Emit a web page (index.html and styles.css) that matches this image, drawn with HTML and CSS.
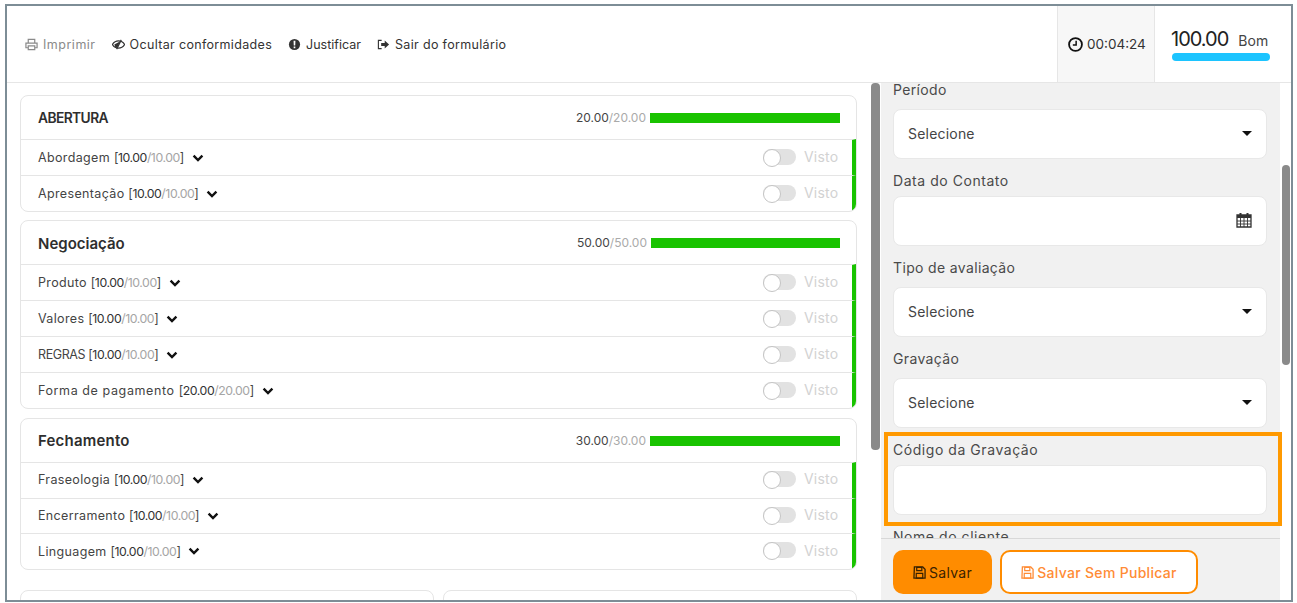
FILE: index.html
```html
<!DOCTYPE html>
<html lang="pt">
<head>
<meta charset="utf-8">
<title>Formulário</title>
<link rel="stylesheet" href="styles.css">
</head>
<body>
<svg class="defs" width="0" height="0" aria-hidden="true">
  <symbol id="chev" viewBox="0 0 12 8"><path d="M1.6 1.6 6 6l4.4-4.4" fill="none" stroke="currentColor" stroke-width="2.4"/></symbol>
  <symbol id="save" viewBox="0 0 14 14"><path d="M1.5 1h9L13 3.5V13H1z" fill="none" stroke="currentColor" stroke-width="1.4"/><path d="M4 1.5h5.500v3.500H4zM3.500 8h7v5h-7z" fill="none" stroke="currentColor" stroke-width="1.300"/></symbol>
</svg>
<div class="frame">
  <header class="topbar">
    <nav class="actions">
      <a class="action muted">
        <svg class="ico" viewBox="0 0 14 14"><path d="M3.500 5V1.500h7V5M3.500 10.500H1V5.500h12v5h-2.500M3.500 8.500h7v4h-7z" fill="none" stroke="currentColor" stroke-width="1.300"/></svg>
        Imprimir</a>
      <a class="action">
        <svg class="ico" viewBox="0 0 14 14"><path d="M.5 7C2 4.600 4.300 3.200 7 3.200S12 4.600 13.500 7C12 9.400 9.700 10.800 7 10.800S2 9.400.5 7z" fill="none" stroke="currentColor" stroke-width="1.300"/><path d="M2.500 7 9 3.500 5.500 10.500A3.800 3.800 0 0 1 2.500 7z" fill="currentColor"/><path d="M10 2 5 12" stroke="currentColor" stroke-width="1.300"/></svg>
        Ocultar conformidades</a>
      <a class="action tight">
        <svg class="ico" viewBox="0 0 14 14"><circle cx="7" cy="7" r="6" fill="currentColor"/><path d="M6 3h2l-.2 5H6.200zM6.100 9.200h1.800V11H6.100z" fill="#fff"/></svg>
        Justificar</a>
      <a class="action">
        <svg class="ico" viewBox="0 0 14 14"><path d="M5 2.500H1.500v9H5" fill="none" stroke="currentColor" stroke-width="1.200"/><path d="M4.500 5.500h3.800V2.800L13 7l-4.700 4.200V8.500H4.500z" fill="currentColor"/></svg>
        Sair do formulário</a>
    </nav>
    <div class="timer">
      <svg class="clock" viewBox="0 0 14 14"><circle cx="7" cy="7" r="6" fill="none" stroke="currentColor" stroke-width="1.700"/><path d="M7.600 3.500v4H4.500" fill="none" stroke="currentColor" stroke-width="1.400"/></svg>
      <span>00:04:24</span>
    </div>
    <div class="score">
      <div class="score-line"><span class="score-num">100.00</span><span class="score-word">Bom</span></div>
      <div class="score-bar"></div>
    </div>
  </header>

  <div class="main">
    <section class="left">
      <div class="cards">
        <article class="card first">
          <div class="card-head"><h2>ABERTURA</h2><span class="pts"><b>20.00</b>/20.00</span><span class="bar"></span></div>
          <div class="rows">
            <div class="row"><span class="q">Abordagem <span class="n">[<b>10.00</b><i>/10.00</i>]</span></span><svg class="chev"><use href="#chev"/></svg><span class="switch"></span><span class="seen">Visto</span></div>
            <div class="row"><span class="q">Apresentação <span class="n">[<b>10.00</b><i>/10.00</i>]</span></span><svg class="chev"><use href="#chev"/></svg><span class="switch"></span><span class="seen">Visto</span></div>
          </div>
        </article>
        <article class="card">
          <div class="card-head"><h2 class="big">Negociação</h2><span class="pts"><b>50.00</b>/50.00</span><span class="bar narrow"></span></div>
          <div class="rows">
            <div class="row"><span class="q">Produto <span class="n">[<b>10.00</b><i>/10.00</i>]</span></span><svg class="chev"><use href="#chev"/></svg><span class="switch"></span><span class="seen">Visto</span></div>
            <div class="row"><span class="q">Valores <span class="n">[<b>10.00</b><i>/10.00</i>]</span></span><svg class="chev"><use href="#chev"/></svg><span class="switch"></span><span class="seen">Visto</span></div>
            <div class="row"><span class="q caps">REGRAS <span class="n">[<b>10.00</b><i>/10.00</i>]</span></span><svg class="chev"><use href="#chev"/></svg><span class="switch"></span><span class="seen">Visto</span></div>
            <div class="row"><span class="q wide">Forma de pagamento <span class="n">[<b>20.00</b><i>/20.00</i>]</span></span><svg class="chev"><use href="#chev"/></svg><span class="switch"></span><span class="seen">Visto</span></div>
          </div>
        </article>
        <article class="card last">
          <div class="card-head"><h2 class="big">Fechamento</h2><span class="pts"><b>30.00</b>/30.00</span><span class="bar"></span></div>
          <div class="rows">
            <div class="row"><span class="q">Fraseologia <span class="n">[<b>10.00</b><i>/10.00</i>]</span></span><svg class="chev"><use href="#chev"/></svg><span class="switch"></span><span class="seen">Visto</span></div>
            <div class="row"><span class="q">Encerramento <span class="n">[<b>10.00</b><i>/10.00</i>]</span></span><svg class="chev"><use href="#chev"/></svg><span class="switch"></span><span class="seen">Visto</span></div>
            <div class="row"><span class="q">Linguagem <span class="n">[<b>10.00</b><i>/10.00</i>]</span></span><svg class="chev"><use href="#chev"/></svg><span class="switch"></span><span class="seen">Visto</span></div>
          </div>
        </article>
        <div class="halves"><div class="half"></div><div class="half"></div></div>
      </div>
      <div class="thumb-left"></div>
    </section>

    <aside class="panel">
      <div class="scroll">
        <div class="form">
          <div class="field"><label class="lab sel">Período</label><div class="box select">Selecione<span class="caret"></span></div></div>
          <div class="field"><label class="lab">Data do Contato</label><div class="box date">
            <svg class="cal" viewBox="0 0 16 16"><path d="M1 3h14v12H1z" fill="none" stroke="currentColor" stroke-width="1.300"/><path d="M1 3h14v3H1z" fill="currentColor"/><path d="M4.500 1v3M11.500 1v3" stroke="currentColor" stroke-width="2"/><path d="M1 9h14M1 12h14M4.500 6v9M8 6v9M11.500 6v9" stroke="currentColor" stroke-width=".9"/></svg>
          </div></div>
          <div class="field"><label class="lab sel">Tipo de avaliação</label><div class="box select">Selecione<span class="caret"></span></div></div>
          <div class="field"><label class="lab sel">Gravação</label><div class="box select">Selecione<span class="caret"></span></div></div>
          <div class="field"><label class="lab">Código da Gravação</label><div class="box"></div></div>
          <div class="field"><label class="lab">Nome do cliente</label><div class="box"></div></div>
        </div>
      </div>
      <footer class="foot">
        <button class="btn solid"><svg class="save"><use href="#save"/></svg>Salvar</button>
        <button class="btn outline"><svg class="save"><use href="#save"/></svg>Salvar Sem Publicar</button>
      </footer>
    </aside>
    <div class="track-right"><div class="thumb-right"></div></div>
  </div>
  <div class="highlight"></div>
</div>
</body>
</html>
```
FILE: styles.css
```css
* { box-sizing: border-box; }
html, body { margin: 0; height: 100%; background: #fff; overflow: hidden; }
body {
  padding: 4px 4px 1px 5px;
  font-family: "Inter", "Noto Sans", sans-serif;
  color: #3d3d3d;
  font-size: 12.5px;
}
.defs { position: absolute; }
.frame {
  position: relative;
  width: 1288px;
  height: 598px;
  border: 2px solid #7d8d96;
  background: #fff;
  overflow: hidden;
  display: flex;
  flex-direction: column;
}
.topbar {
  height: 77px;
  flex: none;
  display: flex;
  border-bottom: 1px solid #e6e6e6;
}
.actions { flex: 1; display: flex; align-items: center; gap: 16px; padding-left: 18px; }
.action { display: flex; align-items: center; gap: 5px; color: #333; letter-spacing: .33px; white-space: nowrap; }
.action.muted { color: #8a8a8a; letter-spacing: .5px; }
.action.tight { letter-spacing: 0; }
.ico { width: 13px; height: 13px; flex: none; }
.timer {
  width: 98px;
  display: flex;
  align-items: center;
  gap: 4px;
  padding-left: 10px;
  background: #f7f7f7;
  border-left: 1px solid #e6e6e6;
  border-right: 1px solid #e6e6e6;
  font-size: 13.500px;
  color: #333;
}
.clock { width: 15px; height: 15px; color: #111; flex: none; }
.score { width: 136px; padding: 21px 0 0 16px; }
.score-line { display: flex; align-items: baseline; gap: 10px; width: 99px; height: 26px; white-space: nowrap; }
.score-num { font-size: 20px; color: #222; letter-spacing: -1px; }
.score-word { font-size: 14px; color: #444; }
.score-bar { width: 98px; height: 8px; margin-left: 1px; border-radius: 4px; background: #1cc4ff; }

.main { flex: 1; min-height: 0; display: flex; }
.left { width: 874px; flex: none; display: flex; }
.cards { width: 864px; flex: none; padding: 12px 14px 0 13px; overflow: hidden; }
.thumb-left { width: 9px; height: 367px; background: #8a8a8a; border-radius: 4px; }
.card { border: 1px solid #e5e5e5; border-radius: 8px; margin-bottom: 9px; overflow: hidden; }
.card.first { margin-bottom: 8px; }
.card.last { margin-bottom: 20px; }
.card-head { height: 43px; display: flex; align-items: center; padding: 0 16px 0 17px; }
.card-head h2 { margin: 0; flex: 1; font-size: 13.800px; font-weight: 600; color: #2e2e2e; letter-spacing: -.6px; }
.card-head h2.big { font-size: 15px; letter-spacing: 0; padding-top: 1px; }
.last .card-head h2.big { letter-spacing: .2px; padding-top: 0; }
.pts { font-size: 12px; color: #aaa; margin-right: 4px; }
.pts b { font-weight: 400; color: #444; }
.bar { width: 190px; height: 10px; background: #19c300; }
.bar.narrow { width: 189px; }
.row { height: 36px; border-top: 1px solid #e5e5e5; border-right: 4px solid #19c300; display: flex; align-items: center; padding: 0 13px 0 17px; }
.last .row { height: 35.700px; padding-bottom: 1px; }
.q { white-space: nowrap; color: #444; font-size: 12.500px; letter-spacing: .35px; }
.q.caps { letter-spacing: -.4px; }
.q.wide { letter-spacing: .6px; }
.n { letter-spacing: -.45px; font-size: 12.300px; }
.q b { font-weight: 400; color: #333; }
.q i { font-style: normal; color: #a5a5a5; }
.chev { width: 12px; height: 8px; margin-left: 8px; color: #111; flex: none; }
.switch { position: relative; width: 33px; height: 16px; margin: 0 0 2px auto; background: #e2e2e2; border-radius: 8px; flex: none; }
.switch::before { content: ""; position: absolute; left: 0; top: 0; width: 16px; height: 16px; border-radius: 50%; background: #fff; border: 1px solid #c4c4c4; }
.seen { width: 35px; margin: 0 0 2px 8px; color: #d2d2d2; font-size: 14px; letter-spacing: .2px; flex: none; }
.halves { display: flex; gap: 9px; }
.half { flex: 1; height: 40px; border: 1px solid #e5e5e5; border-radius: 8px; }

.panel { width: 399px; flex: none; display: flex; flex-direction: column; background: #f1f1f1; }
.scroll { flex: 1; min-height: 0; overflow: hidden; }
.form { margin-top: -3px; padding: 0 13px 0 12px; }
.field { margin-bottom: 12px; }
.lab { display: block; height: 20px; line-height: 19px; margin-bottom: 5px; font-size: 14px; color: #4a4a4a; letter-spacing: .55px; }
.lab.sel { margin-bottom: 9px; letter-spacing: .35px; }
.box { height: 50px; background: #fff; border: 1px solid #e8e8e8; border-radius: 8px; display: flex; align-items: center; padding: 0 14px 2px; color: #444; font-size: 14px; letter-spacing: .2px; }
.box.date { justify-content: flex-end; padding: 0 14px; }
.caret { margin-left: auto; width: 0; height: 0; border-left: 5px solid transparent; border-right: 5px solid transparent; border-top: 5px solid #111; }
.cal { width: 16px; height: 16px; color: #333; margin-top: -2px; }
.foot { height: 62px; flex: none; display: flex; gap: 8px; padding: 11px 12px 0; border-top: 1px solid #d8d8d8; }
.btn { height: 44px; border-radius: 10px; font: inherit; font-size: 14px; letter-spacing: .3px; display: flex; align-items: center; justify-content: center; gap: 3px; padding: 0; }
.btn.solid { width: 99px; background: #ff8c00; border: 0; color: #3a2200; }
.btn.outline { width: 198px; background: #fff; border: 2px solid #ff8c00; color: #ff8c35; font-weight: 500; }
.save { width: 13px; height: 13px; flex: none; }
.track-right { width: 11px; flex: none; padding-left: 2px; }
.thumb-right { width: 8px; height: 200px; margin-top: 82px; background: #8a8a8a; border-radius: 4px; }
.highlight { position: absolute; left: 877px; top: 426px; width: 398px; height: 94px; border: 4px solid #ff9900; pointer-events: none; }
```
